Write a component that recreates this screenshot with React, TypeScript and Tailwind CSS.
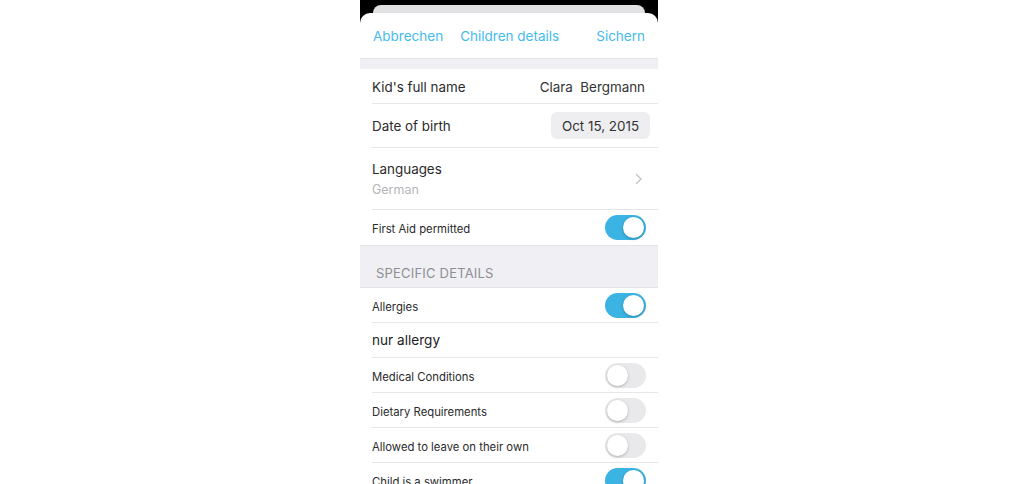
import React from "react";

const font = { fontFamily: '"Inter", "Liberation Sans", sans-serif' };

function Toggle({ on }: { on: boolean }) {
  return (
    <div
      className={
        on
          ? "w-[41px] h-[25px] rounded-full bg-[#3bb3e3] p-[2px] flex justify-end"
          : "w-[41px] h-[25px] rounded-full bg-[#e9e9ec] p-[2px] flex justify-start"
      }
    >
      <div className="w-[21px] h-[21px] rounded-full bg-white shadow-[0_1px_3px_rgba(0,0,0,0.25)]" />
    </div>
  );
}

function ToggleRow({ label, on, last }: { label: string; on: boolean; last?: boolean }) {
  return (
    <div className="pl-[12px]">
      <div
        className={
          "h-[35px] flex items-center justify-between pr-[12px] " +
          (last ? "" : "border-b border-[#e6e6e9]")
        }
      >
        <span className="text-[11.3px] text-[#2a2a2c] pt-[4px]">{label}</span>
        <Toggle on={on} />
      </div>
    </div>
  );
}

export default function App() {
  return (
    <div className="w-full h-[484px] bg-white flex justify-center pr-[6px] overflow-hidden" style={font}>
      <div className="w-[298px] h-[484px] bg-black flex flex-col overflow-hidden">
        <div className="h-[13px] px-[13px] pt-[5px] shrink-0">
          <div className="h-full rounded-t-[8px] bg-[#e2e2e4]" />
        </div>
        <div className="flex-1 bg-white rounded-t-[10px] flex flex-col">
          {/* nav */}
          <div className="h-[45px] shrink-0 flex items-center pl-[13px] pr-[13px] pt-[1px] text-[13.5px] text-[#45bbec]">
            <span>Abbrechen</span>
            <span className="ml-[17px]">Children details</span>
            <span className="flex-1" />
            <span>Sichern</span>
          </div>
          <div className="h-[11px] shrink-0 bg-[#f0f0f4] border-t border-[#e4e4e8]" />
          {/* name */}
          <div className="pl-[12px]">
            <div className="h-[35px] flex items-center justify-between pr-[13px] border-b border-[#e6e6e9] text-[13.4px] text-[#2a2a2c]">
              <span className="pt-[2px]">Kid's full name</span>
              <span className="pt-[2px] text-[#333]">Clara&nbsp; Bergmann</span>
            </div>
          </div>
          {/* dob */}
          <div className="pl-[12px]">
            <div className="h-[44px] flex items-center justify-between pr-[8px] border-b border-[#e6e6e9] text-[13.4px] text-[#2a2a2c]">
              <span className="pt-[2px]">Date of birth</span>
              <span className="h-[27px] w-[99px] rounded-[6px] bg-[#eeeef0] flex items-center justify-center pt-[1px] text-[13.4px] text-[#333]">
                Oct 15, 2015
              </span>
            </div>
          </div>
          {/* languages */}
          <div className="pl-[12px]">
            <div className="h-[62px] flex items-center justify-between pr-[13px] border-b border-[#e6e6e9]">
              <div className="flex flex-col gap-[4px]">
                <span className="text-[13.4px] text-[#2a2a2c] leading-[18px]">Languages</span>
                <span className="text-[12.5px] text-[#b4b4b8] leading-[16px]">German</span>
              </div>
              <svg width="8" height="12" viewBox="0 0 8 12" className="mr-[2px]">
                <path d="M1.5 1.5 L6 6 L1.5 10.5" fill="none" stroke="#c4c4c8" strokeWidth="1.4" strokeLinecap="round" strokeLinejoin="round" />
              </svg>
            </div>
          </div>
          <ToggleRow label="First Aid permitted" on={true} last />
          {/* section */}
          <div className="h-[43px] shrink-0 bg-[#f0f0f4] border-t border-b border-[#e4e4e8] flex items-end pb-[4px] pl-[16px]">
            <span className="text-[13px] text-[#8e8e93] tracking-[0.2px]">SPECIFIC DETAILS</span>
          </div>
          <ToggleRow label="Allergies" on={true} />
          <div className="pl-[12px]">
            <div className="h-[35px] flex items-center pr-[12px] border-b border-[#e6e6e9]">
              <span className="text-[13.6px] text-[#1c1c1e] pt-[1px]">nur allergy</span>
            </div>
          </div>
          <ToggleRow label="Medical Conditions" on={false} />
          <ToggleRow label="Dietary Requirements" on={false} />
          <ToggleRow label="Allowed to leave on their own" on={false} />
          <ToggleRow label="Child is a swimmer" on={true} />
        </div>
      </div>
    </div>
  );
}
